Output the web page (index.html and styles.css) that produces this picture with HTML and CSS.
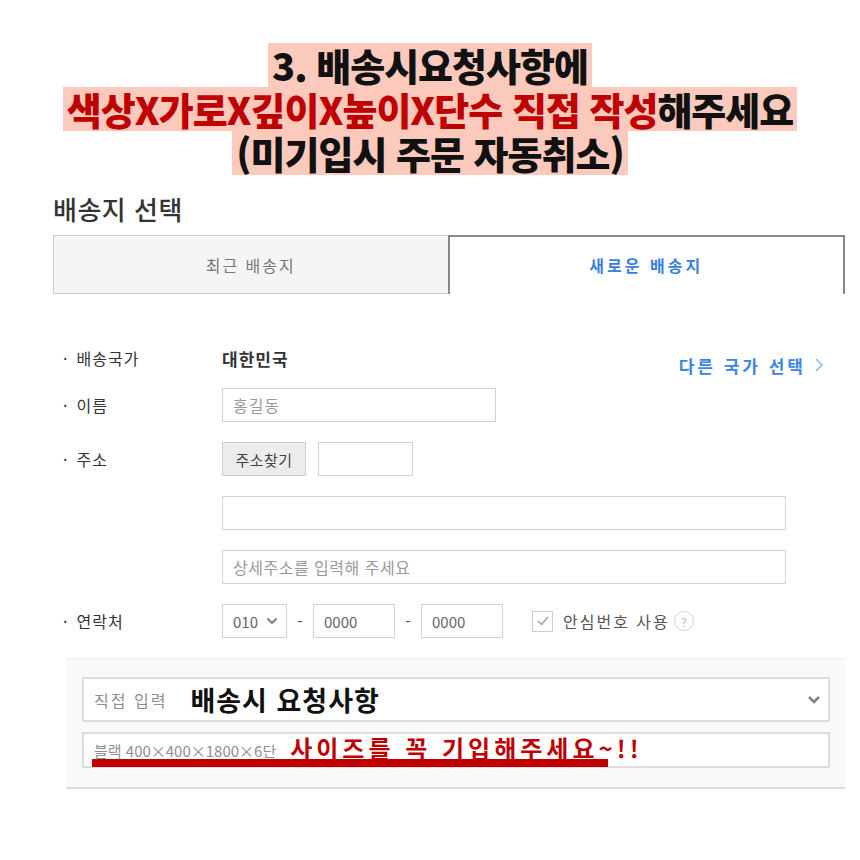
FILE: index.html
```html
<!DOCTYPE html>
<html lang="ko">
<head>
    <meta charset="UTF-8">
    <meta name="viewport" content="width=device-width, initial-scale=1.0">
    <title>배송지 선택</title>
    <link rel="stylesheet" href="styles.css">
</head>
<body>

    <div class="notice">
        <div class="notice-line">3. 배송시요청사항에</div>
        <div class="notice-line"><span class="red">색상X가로X깊이X높이X단수 직접 작성</span>해주세요</div>
        <div class="notice-line">(미기입시 주문 자동취소)</div>
    </div>

    <div class="container">
        <h2 class="title">배송지 선택</h2>

        <div class="tabs">
            <div class="tab">최근 배송지</div>
            <div class="tab active">새로운 배송지</div>
        </div>

        <div class="form">
            <div class="row row-country">
                <div class="label"><span class="dot">·</span>배송국가</div>
                <div class="country">대한민국</div>
                <a class="other-country">다른 국가 선택
                    <svg width="10" height="16" viewBox="0 0 10 16"><polyline points="2,2 8,8 2,14" fill="none" stroke="#8db8ee" stroke-width="1.5"/></svg>
                </a>
            </div>

            <div class="row">
                <div class="label"><span class="dot">·</span>이름</div>
                <div class="field name-field placeholder">홍길동</div>
            </div>

            <div class="row">
                <div class="label"><span class="dot">·</span>주소</div>
                <div class="btn-find">주소찾기</div>
                <div class="field zip-field"></div>
            </div>

            <div class="row">
                <div class="label"></div>
                <div class="field wide-field"></div>
            </div>

            <div class="row">
                <div class="label"></div>
                <div class="field wide-field placeholder">상세주소를 입력해 주세요</div>
            </div>

            <div class="row">
                <div class="label"><span class="dot">·</span>연락처</div>
                <div class="field phone-select">010
                    <svg width="12" height="8" viewBox="0 0 12 8"><polyline points="1.5,1.5 6,6 10.5,1.5" fill="none" stroke="#7a8290" stroke-width="2.2"/></svg>
                </div>
                <span class="dash">-</span>
                <div class="field phone-field">0000</div>
                <span class="dash">-</span>
                <div class="field phone-field">0000</div>
                <div class="safe">
                    <span class="checkbox">
                        <svg width="14" height="12" viewBox="0 0 14 12"><polyline points="2,6 5.5,9.5 12,2" fill="none" stroke="#a0a0a0" stroke-width="1.5"/></svg>
                    </span>
                    안심번호 사용
                    <span class="help">?</span>
                </div>
            </div>
        </div>

        <div class="request">
            <div class="req-select">
                <span class="gray">직접 입력</span>
                <span class="req-title">배송시 요청사항</span>
                <svg class="req-arrow" width="14" height="9" viewBox="0 0 14 9"><polyline points="2,2 7,7 12,2" fill="none" stroke="#7a8290" stroke-width="2.5"/></svg>
            </div>
            <div class="req-input">
                <span class="gray">블랙 400×400×1800×6단</span>
                <span class="req-warn">사이즈를 꼭 기입해주세요~!!</span>
                <span class="underline"></span>
            </div>
        </div>
    </div>

</body>
</html>
```

FILE: styles.css
```css
body {
    margin: 0;
    font-family: "Noto Sans CJK KR", "Noto Sans", sans-serif;
    color: #333;
    background: #fff;
}
.notice {
    padding-top: 43px;
}
.notice-line {
    width: fit-content;
    margin: 0 auto;
    padding: 0 4px;
    background: #fccabd;
    color: #111;
    font-size: 38px;
    font-weight: 900;
    line-height: 44px;
    letter-spacing: -1px;
}
.red {
    display: inline-block;
    line-height: 44px;
    color: #c00000;
}

.container {
    margin: 0 15px 0 53px;
}
.title {
    margin: 19px 0 11px;
    font-size: 26px;
    font-weight: 500;
    line-height: 30px;
    letter-spacing: 0.5px;
    color: #333;
}
.tabs {
    display: flex;
    height: 59px;
}
.tab {
    flex: 1;
    display: flex;
    align-items: center;
    justify-content: center;
    box-sizing: border-box;
    background: #f5f5f5;
    border: 1px solid #ccc;
    border-right: none;
    color: #777;
    font-size: 16px;
    letter-spacing: 2px;
}
.tab.active {
    background: #fff;
    border: 2px solid #888;
    border-bottom: none;
    color: #3a7fdc;
    font-weight: bold;
    letter-spacing: 3px;
    padding-bottom: 2px;
}

.form {
    padding: 47px 0 0 10px;
}
.row {
    display: flex;
    align-items: center;
    height: 34px;
    margin-bottom: 20px;
    font-size: 16px;
}
.row-country {
    margin-bottom: 13px;
}
.label {
    width: 159px;
    flex-shrink: 0;
    color: #333;
    letter-spacing: 1px;
}
.dot {
    margin-right: 8px;
}
.country {
    font-size: 17px;
    font-weight: bold;
    letter-spacing: 1px;
    color: #333;
}
.other-country {
    margin-left: auto;
    margin-top: 14px;
    margin-right: 21px;
    display: flex;
    align-items: center;
    gap: 8px;
    color: #3a86e0;
    font-size: 17px;
    font-weight: bold;
    letter-spacing: 3px;
}
.field {
    box-sizing: border-box;
    height: 34px;
    border: 1px solid #d3d3d3;
    background: #fff;
    display: flex;
    align-items: center;
    padding: 0 10px;
    font-size: 15px;
    color: #666;
}
.placeholder {
    color: #999;
    font-size: 16px;
    letter-spacing: 0.5px;
}
.name-field {
    width: 274px;
    letter-spacing: 1px;
}
.btn-find {
    box-sizing: border-box;
    width: 84px;
    height: 34px;
    display: flex;
    align-items: center;
    justify-content: center;
    background: #ececec;
    border: 1px solid #ccc;
    font-size: 15px;
    letter-spacing: 0.5px;
    color: #444;
}
.zip-field {
    width: 95px;
    margin-left: 12px;
}
.wide-field { width: 564px; }
.phone-select {
    width: 65px;
    justify-content: space-between;
    padding: 0 8px 0 10px;
}
.dash {
    width: 26px;
    text-align: center;
    color: #555;
}
.phone-field { width: 82px; }
.safe {
    display: flex;
    align-items: center;
    margin-left: 29px;
    color: #555;
    font-size: 16px;
    letter-spacing: 2px;
}
.checkbox {
    box-sizing: border-box;
    width: 21px;
    height: 21px;
    border: 1px solid #ccc;
    display: flex;
    align-items: center;
    justify-content: center;
    margin-right: 10px;
}
.help {
    box-sizing: border-box;
    width: 20px;
    height: 20px;
    margin-left: 4px;
    border: 1px solid #d5d5d5;
    border-radius: 50%;
    display: flex;
    align-items: center;
    justify-content: center;
    font-size: 12px;
    letter-spacing: 0;
    color: #bbb;
}

.request {
    margin: 20px 0 0 13px;
    padding: 18px 15px 19px 16px;
    background: #f9f9f9;
    border-top: 1px solid #eee;
    border-bottom: 2px solid #ddd;
}
.req-select,
.req-input {
    position: relative;
    box-sizing: border-box;
    display: flex;
    align-items: center;
    background: #fff;
    border: 2px solid #ddd;
    padding: 0 7px 0 10px;
}
.req-select {
    height: 45px;
    margin-bottom: 10px;
}
.req-input {
    height: 36px;
}
.gray {
    color: #8a8f99;
    font-size: 15px;
}
.req-select .gray {
    font-size: 16px;
    letter-spacing: 2px;
}
.req-title {
    margin-left: 23px;
    font-size: 27px;
    font-weight: bold;
    letter-spacing: 1px;
    color: #111;
}
.req-arrow {
    margin-left: auto;
}
.req-warn {
    position: relative;
    top: -3px;
    z-index: 1;
    margin-left: 14px;
    font-size: 24px;
    font-weight: bold;
    letter-spacing: 4px;
    color: #c00000;
}
.underline {
    position: absolute;
    left: 8px;
    top: 25px;
    width: 516px;
    height: 8px;
    background: #c00000;
}
```
